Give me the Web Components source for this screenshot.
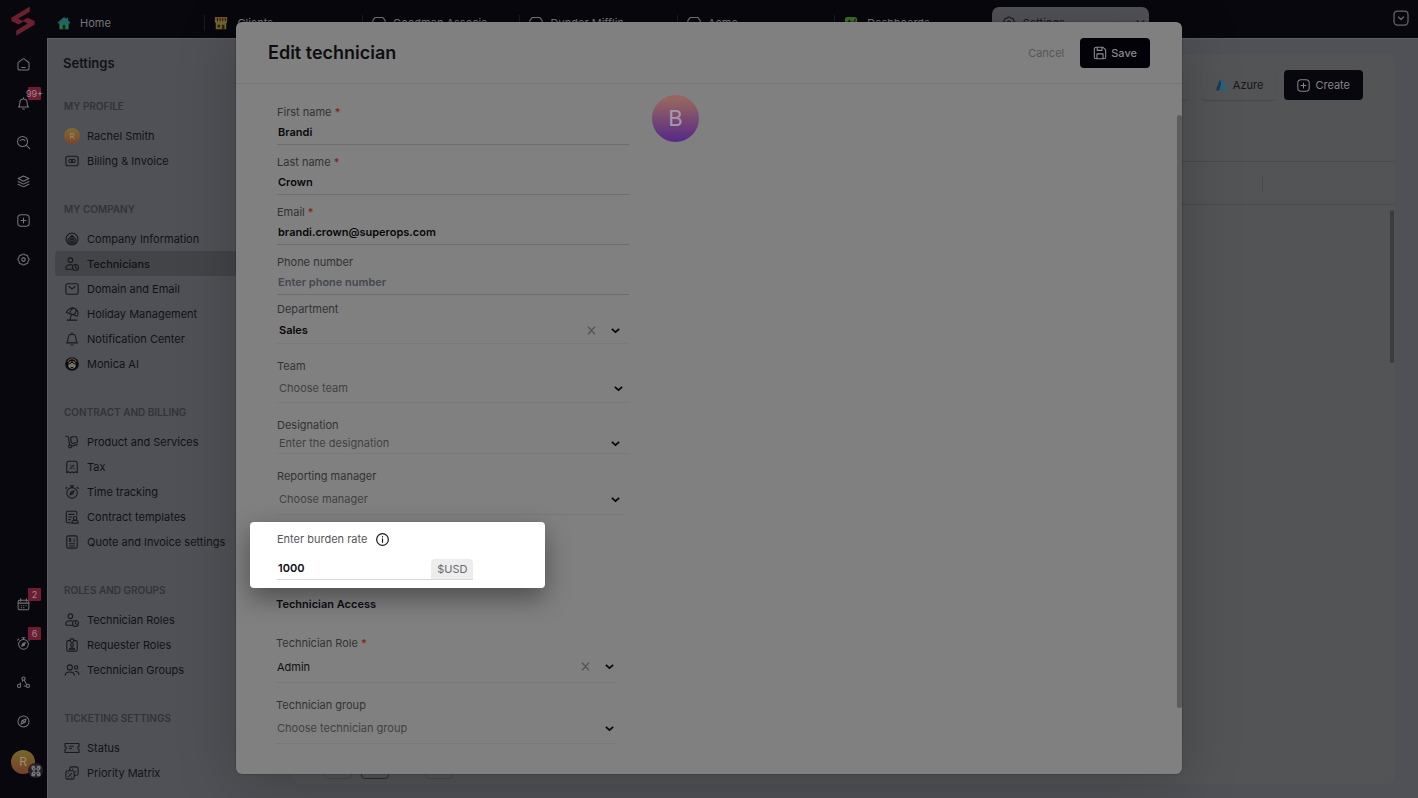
<!DOCTYPE html>
<html lang="en">
  <head>
    <meta charset="UTF-8" />
    <meta name="viewport" content="width=device-width, initial-scale=1.0" />
    <title>Edit technician</title>
    <style>
      html,
      body {
        height: 100%;
        margin: 0;
      }
      body {
        font: 11px/16px Inter, "Liberation Sans", sans-serif;
        background: #08070d;
        color: #121317;
        overflow: hidden;
      }
    </style>
  </head>
  <body>
    <app-shell></app-shell>

    <script>
      // All icons share a 16x16 box and are stroked with currentColor
      const ICONS = {
        logo: '<path fill="#6b2030" stroke="none" d="M11.600.2V3L5.500 6.700 8.300 8.200 5.500 9.800 1.800 8V6.200z"/><path fill="#6b2030" stroke="none" d="M4.400 15.800V13l6.100-3.700-2.800-1.500 2.800-1.600L14.200 8v1.800z"/>',
        home: '<path d="M1.200 6.800c0-.7.3-1.200.8-1.600L6.800 1.500c.7-.6 1.700-.6 2.400 0L14 5.200c.5.4.8.900.8 1.600v5.400c0 1.600-1 2.600-2.600 2.600H3.800c-1.600 0-2.600-1-2.600-2.600zM5.800 11.800h4.400"/>',
        bell: '<path d="M1.800 12.400h12.400c-1.400-1.100-1.800-2-1.800-5.600a4.400 4.400 0 0 0-8.800 0c0 3.600-.4 4.500-1.800 5.600zM6.800 14.800h2.400M8 2.200V1"/>',
        search: '<circle cx="6.800" cy="6.800" r="6.200"/><path d="m11.400 11.400 4.200 4.200M3.800 6C5 3.800 8.500 3.800 9.700 5.800"/>',
        layers: '<path d="m8 1.200 6.600 3.200L8 7.600 1.400 4.400zM1.400 8 8 11.200 14.600 8M1.400 11.400 8 14.600l6.600-3.200"/>',
        plus: '<rect x="1" y="1" width="14" height="14" rx="4"/><path d="M8 5v6M5 8h6"/>',
        gear: '<path d="M5.740 2.550Q8-.2 10.260 2.550 13.800 2.200 13.450 5.740 16.200 8 13.450 10.260 13.800 13.800 10.260 13.450 8 16.200 5.740 13.450 2.200 13.800 2.550 10.260-.2 8 2.550 5.740 2.200 2.200 5.740 2.550z"/><path d="m8 5.600 2 1.200v2.400l-2 1.200-2-1.200V6.800z"/>',
        calendar: '<path d="M1.400 4.600c0-1.200.8-1.800 1.800-1.800h9.600c1 0 1.800.6 1.800 1.800v8c0 1.200-.8 2-1.800 2H3.200c-1 0-1.800-.8-1.800-2zM1.400 6.300h13.200M4.500 1v3M11.500 1v3M5 9.400h.6M8 9.400h.6M11 9.400h.6M5 12h.6M8 12h.6"/>',
        stopwatch: '<circle cx="8" cy="9" r="6"/><path d="M6.200 1h3.600M8 1v2M2 2.600.8 3.900M14 2.600l1.200 1.300M10.300 6.700 9 10.100l-3.300 1.200L7 8z"/><circle cx="8" cy="9" r=".5"/>',
        nodes: '<circle cx="8" cy="3.200" r="2"/><circle cx="2.600" cy="12.200" r="2"/><circle cx="13.400" cy="12.200" r="2"/><path d="M7.200 5.200 6.600 6.500M9 5.200l2.600 4.800M3.700 10.200l.8-1.600M9 12.200h2.200"/>',
        compass: '<circle cx="8" cy="8" r="6.800"/><path d="M11.200 4.800 9.800 9.300l-5 1.900 1.400-4.500z"/><circle cx="8" cy="8" r="1"/>',
        scan: '<path d="M6.500 2.500h-3v3M9.500 2.500h3v3M6.500 13.500h-3v-3M9.500 13.500h3v-3"/><circle cx="5.500" cy="5.500" r="1.500"/><circle cx="10.500" cy="5.500" r="1.500"/><circle cx="5.500" cy="10.500" r="1.500"/><circle cx="10.500" cy="10.500" r="1.500"/>',
        greenHome: '<path fill="#1f6568" stroke="none" d="M8 1 1 7v1.500h2V15h10V8.500h2V7l-2.200-2V2h-2v1.300z"/><path fill="#2a7044" stroke="none" d="M3 8.500h10V15H3z"/><path fill="#0b2720" stroke="none" d="M6.500 10h3v5h-3z"/>',
        shopColor: '<path fill="#706630" stroke="none" d="M1 1h14v6l-1 1v7H2V8L1 7z"/><path fill="#7a4d2a" stroke="none" d="M2 1h12l1 3H1z"/><path stroke="#2c2110" d="M4 3v2.500M7 3v2.500M10 3v2.500M13 3v2.500"/><path fill="#352008" stroke="none" d="M4 10h3v3H4zM9 10h3v5H9z"/>',
        shop: '<path d="M3.500 1.800h9L15 5v2a2 2 0 0 1-2.300 1.600A2 2 0 0 1 10.300 8 3 3 0 0 1 5.700 8a2 2 0 0 1-2.400.6A2 2 0 0 1 1 7V5zM2.500 9v5h11V9"/>',
        chart: '<rect x="1" y="1" width="14" height="14" rx="3" fill="#3f6e27" stroke="none"/><path stroke="#142b0b" stroke-width="1.500" d="m3 10 3-5 3.500 5L13 4"/>',
        expand: '<rect x="1" y="1" width="14" height="14" rx="3.500"/><path d="m5.500 7 2.500 2.500L10.500 7"/>',
        chevron: '<path stroke-width="3.200" stroke-linecap="butt" d="m1.500 5 6.500 6L14.500 5"/>',
        thinChevron: '<path stroke-width="2" d="m2 4.500 6 6 6-6"/>',
        close: '<path stroke-width="2.500" d="m2.500 2 11 12M13.500 2l-11 12"/>',
        save: '<path d="M1.500 3.500a2 2 0 0 1 2-2h8l3 3v8a2 2 0 0 1-2 2h-9a2 2 0 0 1-2-2zM4.500 14.200V9h7v5.200M4.800 1.700V5h5.400V1.700"/>',
        info: '<circle cx="8" cy="8" r="7.200" stroke-width="1.500"/><path stroke-width="1.500" d="M8 7.300v4.200M8 4.400v.5"/>',
        azure: '<path fill="#153c59" stroke="none" d="M5.500 2h4L5 14H1z"/><path fill="#286384" stroke="none" d="M7.500 2h3L15 14H7l3-1-3-3z"/>',
        card: '<rect x="1" y="2.500" width="14" height="11" rx="2.500"/><circle cx="6.500" cy="8" r="2"/><circle cx="9.500" cy="8" r="2"/>',
        company: '<circle cx="8" cy="8" r="6.800"/><path d="M3.500 13V8.500L8 3.800l4.500 4.700V13M5.500 14V9L8 6.500 10.500 9v5M7 14v-3h2v3M6.500 9h3"/>',
        technician: '<circle cx="6.200" cy="3.600" r="2.600"/><path d="M8 14H2.200C1 14 .8 13 1 12c.4-2 2.400-3.200 5-3.200.8 0 1.600.1 2.300.4"/><circle cx="12" cy="12" r="3.400"/><path d="M12 10v2.200l1 .8"/>',
        mail: '<rect x="1" y="2" width="14" height="12" rx="2"/><path d="m4.500 5.200 2.500 2c.6.500 1.400.5 2 0l2.500-2"/>',
        umbrella: '<path d="M1.500 6.300C3 2 8-.2 11.500 1.800c3.500 2 4.200 6 2.500 8.700zM5.500 7.900C5.200 4 8.500.8 11.500 1.800c2.300 1.200 1 5.400-1.800 7.100M7.700 7.800 5.500 15M2.500 15h11"/>',
        monica: '<circle cx="8" cy="8" r="7.800" fill="#0c0c0c" stroke="none"/><path stroke="#6d5a27" d="M3.500 5c1.500-4 7.500-4 9 0"/><circle cx="8" cy="9" r="4.300" fill="#77746c" stroke="none"/><path stroke="#111" d="M4 8c2 0 3-1 4-3 1 2 2 3 4 3M7 12h2"/>',
        trolley: '<path d="M1 1.500h1.500c1 0 1.300.6 1.500 1.500l1.300 8.300M7.300 12.800 14 11"/><circle cx="5.800" cy="13" r="1.700"/><path d="m6.500 4 .8 4.500c.2 1 .7 1.300 1.700 1.100l4-.8c1-.2 1.500-.8 1.300-1.800l-.8-4c-.2-1-.8-1.500-1.800-1.300l-4 .7C6.700 2.600 6.300 3 6.500 4z"/>',
        tax: '<path d="M2 3.500c0-1.200.7-2 2-2h8c1.300 0 2 .8 2 2v11l-2-1-2 1-2-1-2 1-2-1-2 1zM6 9.800l4-4M6.200 6h.3M9.600 9.600h.3"/>',
        contract: '<path d="M6.500 14.500H3.200c-1 0-1.700-.7-1.700-1.700V3.200c0-1 .7-1.700 1.700-1.700h8.600c1 0 1.700.7 1.700 1.700v2.300M4.300 5h6M4.300 8h3.500M4.300 11h2"/><circle cx="11.500" cy="9.500" r="2"/><path d="M8 15v-1.500c0-1 1-1.500 2-1.500h3c1 0 2 .5 2 1.500V15z"/>',
        invoice: '<rect x="2" y="1" width="12" height="14" rx="2"/><path d="M6.500 4H5.200v1.600h1.300v1.600H5M10 4.500h1M10 7h1M5 10h6M5 12.500h6"/>',
        badge: '<path d="M5.800 3H4a2 2 0 0 0-2 2v8a2 2 0 0 0 2 2h8a2 2 0 0 0 2-2V5a2 2 0 0 0-2-2h-1.800"/><rect x="6" y="1" width="4" height="3.500" rx="1"/><circle cx="8" cy="8" r="1.700"/><path d="M5 12.800c.4-2 5.600-2 6 0z"/>',
        group: '<circle cx="5.500" cy="5" r="2.900"/><path d="M.3 14c0-2.200 2.200-3.800 5.200-3.800s5.200 1.600 5.200 3.800"/><circle cx="12.700" cy="5" r="1.900"/><path d="M11.800 9.700c2.300-.4 4 1 4 3.500"/>',
        ticket: '<path d="M0 2.800h16v3.400c-2 .7-2 2.900 0 3.600v3.400H0V9.800c2-.7 2-2.900 0-3.600zM5 6h4.500M5 8.500h2.500"/>',
        matrix: '<rect x="1" y="5.500" width="9.500" height="9.500" rx="2"/><path d="M5.500 5V3c0-1.300.6-2 2-2h5.300c1.500 0 2.200.7 2.200 2.200v5.300c0 1.400-.7 2-2 2h-2M8.500 3.500h.5M12 6.500h.5M3.500 8h.5M7.500 12.500h.3M3.700 12.500l4-4"/>',
      };

      class AppIcon extends HTMLElement {
        constructor() {
          super();
          this.attachShadow({ mode: "open" });
        }
        connectedCallback() {
          this.shadowRoot.innerHTML = `
            <style>
              :host { display: inline-block; flex: none; width: var(--size, 16px); height: var(--size, 16px); }
              svg { display: block; width: 100%; height: 100%; overflow: visible; }
            </style>
            <svg viewBox="0 0 16 16" fill="none" stroke="currentColor" stroke-width="1.25"
              stroke-linejoin="round" stroke-linecap="round" aria-hidden="true">${ICONS[this.getAttribute("name")]}</svg>`;
        }
      }
      customElements.define("app-icon", AppIcon);

      /* ---------- left rail ---------- */
      class RailButton extends HTMLElement {
        constructor() {
          super();
          this.attachShadow({ mode: "open" });
        }
        connectedCallback() {
          const badge = this.getAttribute("badge");
          this.shadowRoot.innerHTML = `
            <style>
              :host { display: block; }
              button { position: relative; display: grid; place-items: center; width: 24px; height: 24px; padding: 0; border: 0; background: none; color: #76757a; font: inherit; cursor: pointer; }
              app-icon { --size: 13px; }
              .badge { position: absolute; left: 17px; top: -4px; width: 13px; height: 13px; display: flex; justify-content: center; border-radius: 1px; background: #6d1d32; color: #a08790; font-size: 9px; line-height: 13px; }
            </style>
            <button aria-label="${this.getAttribute("label")}">
              <app-icon name="${this.getAttribute("icon")}"></app-icon>
              ${badge ? `<span class="badge">${badge}</span>` : ""}
            </button>`;
        }
      }
      customElements.define("rail-button", RailButton);

      class AppRail extends HTMLElement {
        constructor() {
          super();
          this.attachShadow({ mode: "open" }).innerHTML = `
            <style>
              :host { display: flex; flex-direction: column; align-items: center; box-sizing: border-box; padding: 6px 1px 22px 0; background: #08070d; }
              .logo { --size: 30px; margin-bottom: 16px; }
              nav { display: flex; flex-direction: column; gap: 15px; }
              .bottom { margin-top: auto; }
              .user { position: relative; display: grid; place-items: center; width: 24px; height: 28px; padding: 0; border: 0; background: none; font: inherit; color: #a08a70; }
              .user .face { width: 24px; height: 24px; border-radius: 50%; background: linear-gradient(#77662b, #75402a); line-height: 24px; font-size: 12px; }
              .user .scan { position: absolute; left: 17px; top: 15px; display: grid; place-items: center; width: 15px; height: 15px; border-radius: 50%; background: #222226; color: #85858a; --size: 14px; }
            </style>
            <app-icon class="logo" name="logo"></app-icon>
            <nav aria-label="Main">
              <rail-button icon="home" label="Home"></rail-button>
              <rail-button icon="bell" label="Notifications" badge="99+"></rail-button>
              <rail-button icon="search" label="Search"></rail-button>
              <rail-button icon="layers" label="Modules"></rail-button>
              <rail-button icon="plus" label="New"></rail-button>
              <rail-button icon="gear" label="Settings"></rail-button>
            </nav>
            <nav class="bottom" aria-label="Tools">
              <rail-button icon="calendar" label="Calendar" badge="2"></rail-button>
              <rail-button icon="stopwatch" label="Timers" badge="6"></rail-button>
              <rail-button icon="nodes" label="Network"></rail-button>
              <rail-button icon="compass" label="Explore"></rail-button>
              <button class="user" aria-label="Account"><span class="face">R</span><span class="scan"><app-icon name="scan"></app-icon></span></button>
            </nav>`;
        }
      }
      customElements.define("app-rail", AppRail);

      /* ---------- top tabs ---------- */
      class TopTab extends HTMLElement {
        constructor() {
          super();
          this.attachShadow({ mode: "open" });
        }
        connectedCallback() {
          this.shadowRoot.innerHTML = `
            <style>
              :host { display: flex; flex: 0 1 11.7%; min-width: 0; box-sizing: border-box; }
              a { display: flex; flex: 1; align-items: center; gap: 7px; padding-left: 10px; color: #77777b; text-decoration: none; white-space: nowrap; background: linear-gradient(#1b1b21, #1b1b21) no-repeat 0 50% / 1px 16px; }
              app-icon { --size: 14px; }
              :host([wide]) a { gap: 9px; }
              :host([first]) a { background: none; }
              :host([active]) a { background: #525357; color: #18191d; border-radius: 7px 7px 0 0; padding-right: 4px; }
              .arrow { display: none; margin-left: auto; --size: 9px; }
              :host([active]) .arrow { display: block; }
            </style>
            <a href="#"><app-icon name="${this.getAttribute("icon")}"></app-icon><slot></slot><app-icon class="arrow" name="thinChevron"></app-icon></a>`;
        }
      }
      customElements.define("top-tab", TopTab);

      class TopBar extends HTMLElement {
        constructor() {
          super();
          this.attachShadow({ mode: "open" }).innerHTML = `
            <style>
              :host { display: flex; box-sizing: border-box; height: 38px; padding: 7px 9px 0 0; background: #08070d; }
              nav { display: flex; flex: 1; }
              button { align-self: flex-start; margin-top: 3px; padding: 0; border: 0; background: none; color: #67676b; --size: 16px; }
            </style>
            <nav aria-label="Tabs">
              <top-tab first wide icon="greenHome">Home</top-tab>
              <top-tab wide icon="shopColor">Clients</top-tab>
              <top-tab icon="shop">Goodman Associa</top-tab>
              <top-tab icon="shop">Dunder Mifflin</top-tab>
              <top-tab icon="shop">Acme</top-tab>
              <top-tab wide icon="chart">Dashboards</top-tab>
              <top-tab active icon="gear">Settings</top-tab>
            </nav>
            <button aria-label="All tabs"><app-icon name="expand"></app-icon></button>`;
        }
      }
      customElements.define("top-bar", TopBar);

      /* ---------- settings menu ---------- */
      class MenuSection extends HTMLElement {
        constructor() {
          super();
          this.attachShadow({ mode: "open" });
        }
        connectedCallback() {
          this.shadowRoot.innerHTML = `
            <style>
              :host { display: block; }
              h2 { margin: 0 0 9px 9px; font-size: 10px; line-height: 16px; font-weight: 600; text-transform: uppercase; color: #323338; }
            </style>
            <h2>${this.getAttribute("heading")}</h2>
            <slot></slot>`;
        }
      }
      customElements.define("menu-section", MenuSection);

      class MenuItem extends HTMLElement {
        constructor() {
          super();
          this.attachShadow({ mode: "open" });
        }
        connectedCallback() {
          const icon = this.getAttribute("icon");
          this.shadowRoot.innerHTML = `
            <style>
              :host { display: block; }
              a { display: flex; align-items: center; gap: 7px; height: 25px; padding-left: 9px; border-radius: 4px 0 0 4px; color: #101115; text-decoration: none; white-space: nowrap; }
              app-icon { --size: 14px; margin: 0 1px; color: #18191d; }
              :host([active]) a { background: #434448; font-weight: 500; }
              .face { width: 16px; height: 16px; border-radius: 50%; background: linear-gradient(#7d6c30, #7a4528); color: #a08a70; font-size: 8px; line-height: 16px; text-align: center; }
            </style>
            <a href="#">${icon ? `<app-icon name="${icon}"></app-icon>` : '<span class="face">R</span>'}<slot></slot></a>`;
        }
      }
      customElements.define("menu-item", MenuItem);

      class SettingsMenu extends HTMLElement {
        constructor() {
          super();
          this.attachShadow({ mode: "open" }).innerHTML = `
            <style>
              :host { display: flex; flex-direction: column; box-sizing: border-box; padding: 15px 0 0 7px; overflow: hidden; }
              h1 { margin: 0 0 26px 8px; font-size: 13px; line-height: 18px; font-weight: 600; color: #101115; }
              nav { display: flex; flex-direction: column; gap: 28px; }
            </style>
            <h1>Settings</h1>
            <nav aria-label="Settings">
              <menu-section heading="My profile">
                <menu-item>Rachel Smith</menu-item>
                <menu-item icon="card">Billing &amp; Invoice</menu-item>
              </menu-section>
              <menu-section heading="My company">
                <menu-item icon="company">Company Information</menu-item>
                <menu-item icon="technician" active>Technicians</menu-item>
                <menu-item icon="mail">Domain and Email</menu-item>
                <menu-item icon="umbrella">Holiday Management</menu-item>
                <menu-item icon="bell">Notification Center</menu-item>
                <menu-item icon="monica">Monica AI</menu-item>
              </menu-section>
              <menu-section heading="Contract and billing">
                <menu-item icon="trolley">Product and Services</menu-item>
                <menu-item icon="tax">Tax</menu-item>
                <menu-item icon="stopwatch">Time tracking</menu-item>
                <menu-item icon="contract">Contract templates</menu-item>
                <menu-item icon="invoice">Quote and Invoice settings</menu-item>
              </menu-section>
              <menu-section heading="Roles and groups">
                <menu-item icon="technician">Technician Roles</menu-item>
                <menu-item icon="badge">Requester Roles</menu-item>
                <menu-item icon="group">Technician Groups</menu-item>
              </menu-section>
              <menu-section heading="Ticketing settings">
                <menu-item icon="ticket">Status</menu-item>
                <menu-item icon="matrix">Priority Matrix</menu-item>
              </menu-section>
            </nav>`;
        }
      }
      customElements.define("settings-menu", SettingsMenu);

      /* ---------- technician list behind the dialog ---------- */
      class TechnicianList extends HTMLElement {
        constructor() {
          super();
          this.attachShadow({ mode: "open" }).innerHTML = `
            <style>
              :host { display: flex; box-sizing: border-box; padding: 15px 23px 14px 15px; }
              section { display: flex; flex: 1; flex-direction: column; border-radius: 8px; background: #535455; }
              .actions { display: flex; justify-content: flex-end; gap: 8px; padding: 16px 32px 16px 0; }
              .actions button { display: flex; align-items: center; gap: 5px; box-sizing: border-box; height: 30px; padding: 0 13px; border: 0; border-radius: 4px; background: #535455; box-shadow: 0 1px 1px #48494a; font: inherit; color: #131418; --size: 13px; }
              .actions .create { background: #08070d; color: #85858a; box-shadow: none; }
              .blank { width: 70px; margin-right: 6px; }
              .head { margin-top: 45px; height: 42px; display: flex; justify-content: flex-end; align-items: center; border: solid #4a4b4c; border-width: 1px 0; }
              .head i { width: 1px; height: 15px; margin-right: 132px; background: #494a4b; }
              .rows { flex: 1; display: flex; justify-content: flex-end; padding-top: 5px; }
              .thumb { width: 4px; height: 28%; margin-right: 1px; border-radius: 2px; background: #3b3c3d; }
              .pager { display: flex; gap: 9px; padding: 0 0 5px 32px; }
              .pager button { width: 28px; height: 22px; padding: 0; border: 1px solid #48494b; border-radius: 4px; background: none; }
              .pager .current { margin-right: 27px; border-color: #2b2c2f; }
            </style>
            <section>
              <div class="actions">
                <button class="blank" aria-label="Import"></button>
                <button><app-icon name="azure"></app-icon>Azure</button>
                <button class="create"><app-icon name="plus"></app-icon>Create</button>
              </div>
              <div class="head"><i></i></div>
              <div class="rows"><div class="thumb"></div></div>
              <div class="pager"><button aria-label="Previous page"></button><button class="current" aria-label="Current page"></button><button aria-label="Next page"></button></div>
            </section>`;
        }
      }
      customElements.define("technician-list", TechnicianList);

      /* ---------- form fields ---------- */
      const FIELD_STYLE = `
        :host { display: block; margin-left: 27px; padding-top: var(--space, 14px); }
        label { display: block; line-height: 16px; color: #323235; }
        label b { color: #85200f; font-weight: 500; }
        .control { display: flex; align-items: center; height: var(--control, 30px); border-bottom: 1px solid #787979; }
        input, select { flex: 1; min-width: 0; padding: 0; border: 0; outline: 0; background: none; color: #08080a; font: inherit; }
      `;

      class TextField extends HTMLElement {
        constructor() {
          super();
          this.attachShadow({ mode: "open" });
        }
        connectedCallback() {
          const value = this.getAttribute("value") || "";
          const placeholder = this.getAttribute("placeholder") || "";
          this.shadowRoot.innerHTML = `
            <style>${FIELD_STYLE}
              :host { --space: 9px; --control: 24px; }
              .control { border-color: #6c6d6f; }
              input { padding-left: 1px; font-weight: 600; }
              input::placeholder { color: #43484f; opacity: 1; }
            </style>
            <label for="field"><slot></slot>${this.hasAttribute("required") ? " <b>*</b>" : ""}</label>
            <div class="control"><input id="field" value="${value}" placeholder="${placeholder}" /></div>`;
        }
      }
      customElements.define("text-field", TextField);

      class SelectField extends HTMLElement {
        constructor() {
          super();
          this.attachShadow({ mode: "open" });
        }
        connectedCallback() {
          const clear = this.hasAttribute("clearable")
            ? '<button type="button" aria-label="Clear"><app-icon name="close"></app-icon></button>'
            : "";
          this.shadowRoot.innerHTML = `
            <style>${FIELD_STYLE}
              .control { gap: 15px; padding: 0 var(--end, 9px) 0 var(--start, 2px); --size: 9px; }
              select { appearance: none; color: #414143; }
              :host([clearable]) select { color: #111113; }
              :host([strong]) select { color: #08080a; font-weight: 600; }
              button { display: flex; padding: 0; border: 0; background: none; color: #515153; }
              .arrow { color: #08080a; pointer-events: none; }
            </style>
            <label for="field"><slot></slot>${this.hasAttribute("required") ? " <b>*</b>" : ""}</label>
            <div class="control">
              <select id="field"><option>${this.getAttribute("value")}</option></select>
              ${clear}
              <app-icon class="arrow" name="chevron"></app-icon>
            </div>`;
        }
      }
      customElements.define("select-field", SelectField);

      class BurdenRate extends HTMLElement {
        constructor() {
          super();
          this.attachShadow({ mode: "open" }).innerHTML = `
            <style>
              :host { display: block; box-sizing: border-box; width: 78%; margin-top: 7px; padding: 9px 72px 8px 27px; border-radius: 4px; background: #fff; box-shadow: 0 10px 26px rgba(0, 0, 0, 0.4); }
              .label { display: flex; align-items: center; gap: 9px; height: 16px; color: #55565a; --size: 13px; }
              app-icon { color: #1c1c20; }
              .control { display: flex; height: 20px; margin-top: 12px; border-bottom: 1px solid #d9d9dc; }
              input { flex: 1; min-width: 0; height: 18px; padding: 0 0 0 1px; border: 0; outline: 0; background: none; color: #0c0c10; font: inherit; font-weight: 600; }
              .unit { padding: 0 6px; border-radius: 4px 4px 0 0; background: #ededee; color: #68696d; line-height: 21px; }
            </style>
            <div class="label"><label for="rate">Enter burden rate</label><app-icon name="info"></app-icon></div>
            <div class="control"><input id="rate" value="1000" /><span class="unit">$USD</span></div>`;
        }
      }
      customElements.define("burden-rate", BurdenRate);

      /* ---------- dialog ---------- */
      class EditDialog extends HTMLElement {
        constructor() {
          super();
          this.attachShadow({ mode: "open" }).innerHTML = `
            <style>
              :host { display: flex; flex-direction: column; border-radius: 6px; background: #808080; box-shadow: 0 0 0 1px rgba(0, 0, 0, 0.12), 0 8px 60px rgba(0, 0, 0, 0.22); overflow: hidden; }
              header { display: flex; align-items: center; gap: 16px; height: 61px; padding: 0 32px; border-bottom: 1px solid #757677; }
              h1 { flex: 1; margin: 0; font-size: 18px; line-height: 24px; font-weight: 600; color: #0e0e11; }
              header button { padding: 0; border: 0; background: none; color: #565658; font: inherit; }
              header .save { display: flex; align-items: center; gap: 4px; height: 30px; padding: 0 13px; border-radius: 4px; background: #030208; color: #8a8a8c; font-weight: 500; --size: 14px; }
              form { position: relative; flex: 1; display: grid; grid-template-columns: 41% 1fr; gap: 23px; align-items: start; padding: 11px 8px 0 14px; }
              h2 { margin: 8px 0 0 26px; font-size: 11px; line-height: 16px; font-weight: 600; color: #0b0b10; }
              .department { --space: 6px; --control: 26px; }
              .team { --control: 28px; --end: 6px; }
              .designation { --control: 20px; }
              .manager { margin-right: 4px; --end: 5px; }
              .access { margin: 0 12px 0 26px; --start: 1px; --end: 3px; }
              .role { --space: 23px; --control: 31px; }
              .avatar { width: 47px; height: 47px; border-radius: 50%; background: linear-gradient(#966560 10%, #552888); color: #a79aa8; font-size: 22px; line-height: 47px; text-align: center; }
              .thumb { position: absolute; right: 0; top: 31px; width: 5px; height: 86%; border-radius: 3px; background: #5d5d5e; }
            </style>
            <header>
              <h1>Edit technician</h1>
              <button>Cancel</button>
              <button class="save"><app-icon name="save"></app-icon>Save</button>
            </header>
            <form>
              <div>
                <text-field required value="Brandi">First name</text-field>
                <text-field required value="Crown">Last name</text-field>
                <text-field required value="brandi.crown@superops.com">Email</text-field>
                <text-field placeholder="Enter phone number">Phone number</text-field>
                <select-field class="department" clearable strong value="Sales">Department</select-field>
                <select-field class="team" value="Choose team">Team</select-field>
                <select-field class="designation" value="Enter the designation">Designation</select-field>
                <select-field class="manager" value="Choose manager">Reporting manager</select-field>
                <burden-rate></burden-rate>
                <h2>Technician Access</h2>
                <select-field class="access role" required clearable value="Admin">Technician Role</select-field>
                <select-field class="access" value="Choose technician group">Technician group</select-field>
              </div>
              <div class="avatar">B</div>
              <div class="thumb"></div>
            </form>`;
        }
      }
      customElements.define("edit-dialog", EditDialog);

      class AppShell extends HTMLElement {
        constructor() {
          super();
          this.attachShadow({ mode: "open" }).innerHTML = `
            <style>
              :host { position: relative; display: grid; grid-template: auto minmax(0, 1fr) / 47px 1fr; height: 100vh; }
              app-rail { grid-row: 1 / 3; }
              main { display: grid; grid-template-columns: 229px 1fr; min-height: 0; border: solid #5c5d62; border-width: 1px 0 0 1px; box-sizing: border-box; background: #505156; }
              edit-dialog { position: absolute; inset: 22px 236px 24px; }
            </style>
            <app-rail></app-rail>
            <top-bar></top-bar>
            <main>
              <settings-menu></settings-menu>
              <technician-list></technician-list>
            </main>
            <edit-dialog role="dialog" aria-label="Edit technician"></edit-dialog>`;
        }
      }
      customElements.define("app-shell", AppShell);
    </script>
  </body>
</html>
